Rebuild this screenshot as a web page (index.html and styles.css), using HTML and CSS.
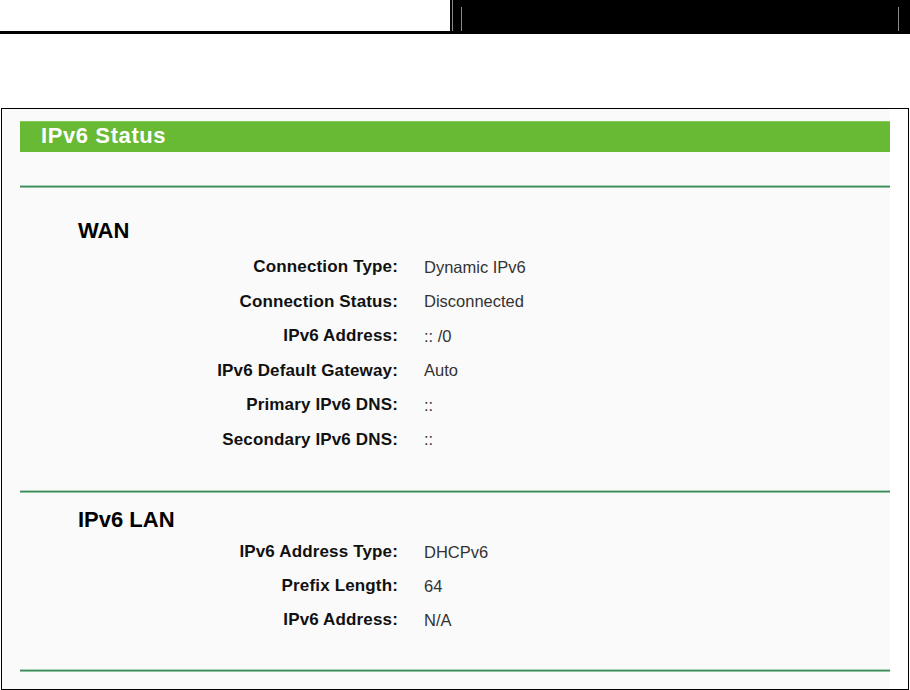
FILE: index.html
```html
<!DOCTYPE html>
<html>
<head>
<meta charset="utf-8">
<link rel="stylesheet" href="styles.css">
<title>IPv6 Status</title>
</head>
<body>
<div class="doc-header">
  <div class="doc-header-left"></div>
  <div class="doc-header-right"><div class="doc-header-box"></div></div>
</div>
<div class="panel">
  <div class="panel-inner">
    <div class="title-bar">IPv6 Status</div>
    <div class="divider first"></div>
    <div class="section wan">
      <h2 class="section-title">WAN</h2>
      <div class="rows">
        <div class="label">Connection Type:</div><div class="value">Dynamic IPv6</div>
        <div class="label">Connection Status:</div><div class="value">Disconnected</div>
        <div class="label">IPv6 Address:</div><div class="value">:: /0</div>
        <div class="label">IPv6 Default Gateway:</div><div class="value">Auto</div>
        <div class="label">Primary IPv6 DNS:</div><div class="value">::</div>
        <div class="label">Secondary IPv6 DNS:</div><div class="value">::</div>
      </div>
    </div>
    <div class="divider"></div>
    <div class="section lan">
      <h2 class="section-title">IPv6 LAN</h2>
      <div class="rows">
        <div class="label">IPv6 Address Type:</div><div class="value">DHCPv6</div>
        <div class="label">Prefix Length:</div><div class="value">64</div>
        <div class="label">IPv6 Address:</div><div class="value">N/A</div>
      </div>
    </div>
    <div class="divider"></div>
  </div>
</div>
</body>
</html>
```

FILE: styles.css
```css
html, body {
  margin: 0;
  padding: 0;
  background: #ffffff;
  font-family: "Liberation Sans", Arial, sans-serif;
}

.doc-header {
  display: flex;
  height: 34px;
}
.doc-header-left {
  width: 450px;
  border-bottom: 3px solid #000;
  box-sizing: border-box;
}
.doc-header-right {
  flex: 1;
  background: #000;
  padding: 7px 11px 3px 10px;
  box-sizing: border-box;
  border-left: 1px solid #000;
  position: relative;
}
.doc-header-right::before {
  content: "";
  position: absolute;
  left: 1px;
  top: 0;
  bottom: 3px;
  width: 1px;
  background: #8a8a8a;
}
.doc-header-box {
  height: 100%;
  border-left: 1px solid #8a8a8a;
  border-right: 1px solid #8a8a8a;
}

.panel {
  margin: 74px 0 0 1px;
  width: 908px;
  height: 582px;
  border: 1px solid #000;
  box-sizing: border-box;
  background: #ffffff;
}
.panel-inner {
  width: 888px;
  height: 100%;
  background: #fafafa;
  padding: 12px 0 0 18px;
  box-sizing: border-box;
}

.title-bar {
  height: 31px;
  background: #68b934;
  border-top: 1px solid #86c85c;
  box-sizing: border-box;
  color: #ffffff;
  font-weight: bold;
  font-size: 22px;
  letter-spacing: 0.6px;
  line-height: 28px;
  padding-left: 21px;
}

.divider {
  height: 3px;
  background: linear-gradient(#a9d2b8 0, #a9d2b8 1px, #3d8a5c 1px, #3d8a5c 2px, #8fc2a2 2px);
}
.divider.first {
  margin-top: 33px;
}

.section {
  padding-left: 58px;
}
.section.wan {
  padding-top: 28px;
  padding-bottom: 33px;
}
.section.lan {
  padding-top: 12px;
  padding-bottom: 32px;
}

.section-title {
  margin: 0;
  font-size: 22px;
  font-weight: bold;
  line-height: 30px;
  color: #000;
}
.wan .section-title {
  margin-bottom: 4px;
}

.rows {
  display: grid;
  grid-template-columns: 320px auto;
  column-gap: 26px;
  grid-auto-rows: 34.5px;
  align-items: center;
}
.lan .rows {
  grid-auto-rows: 34px;
}
.label {
  text-align: right;
  font-weight: bold;
  font-size: 17px;
  letter-spacing: 0.15px;
  color: #111;
  white-space: nowrap;
}
.value {
  font-size: 16.5px;
  color: #333;
  white-space: nowrap;
}
```
